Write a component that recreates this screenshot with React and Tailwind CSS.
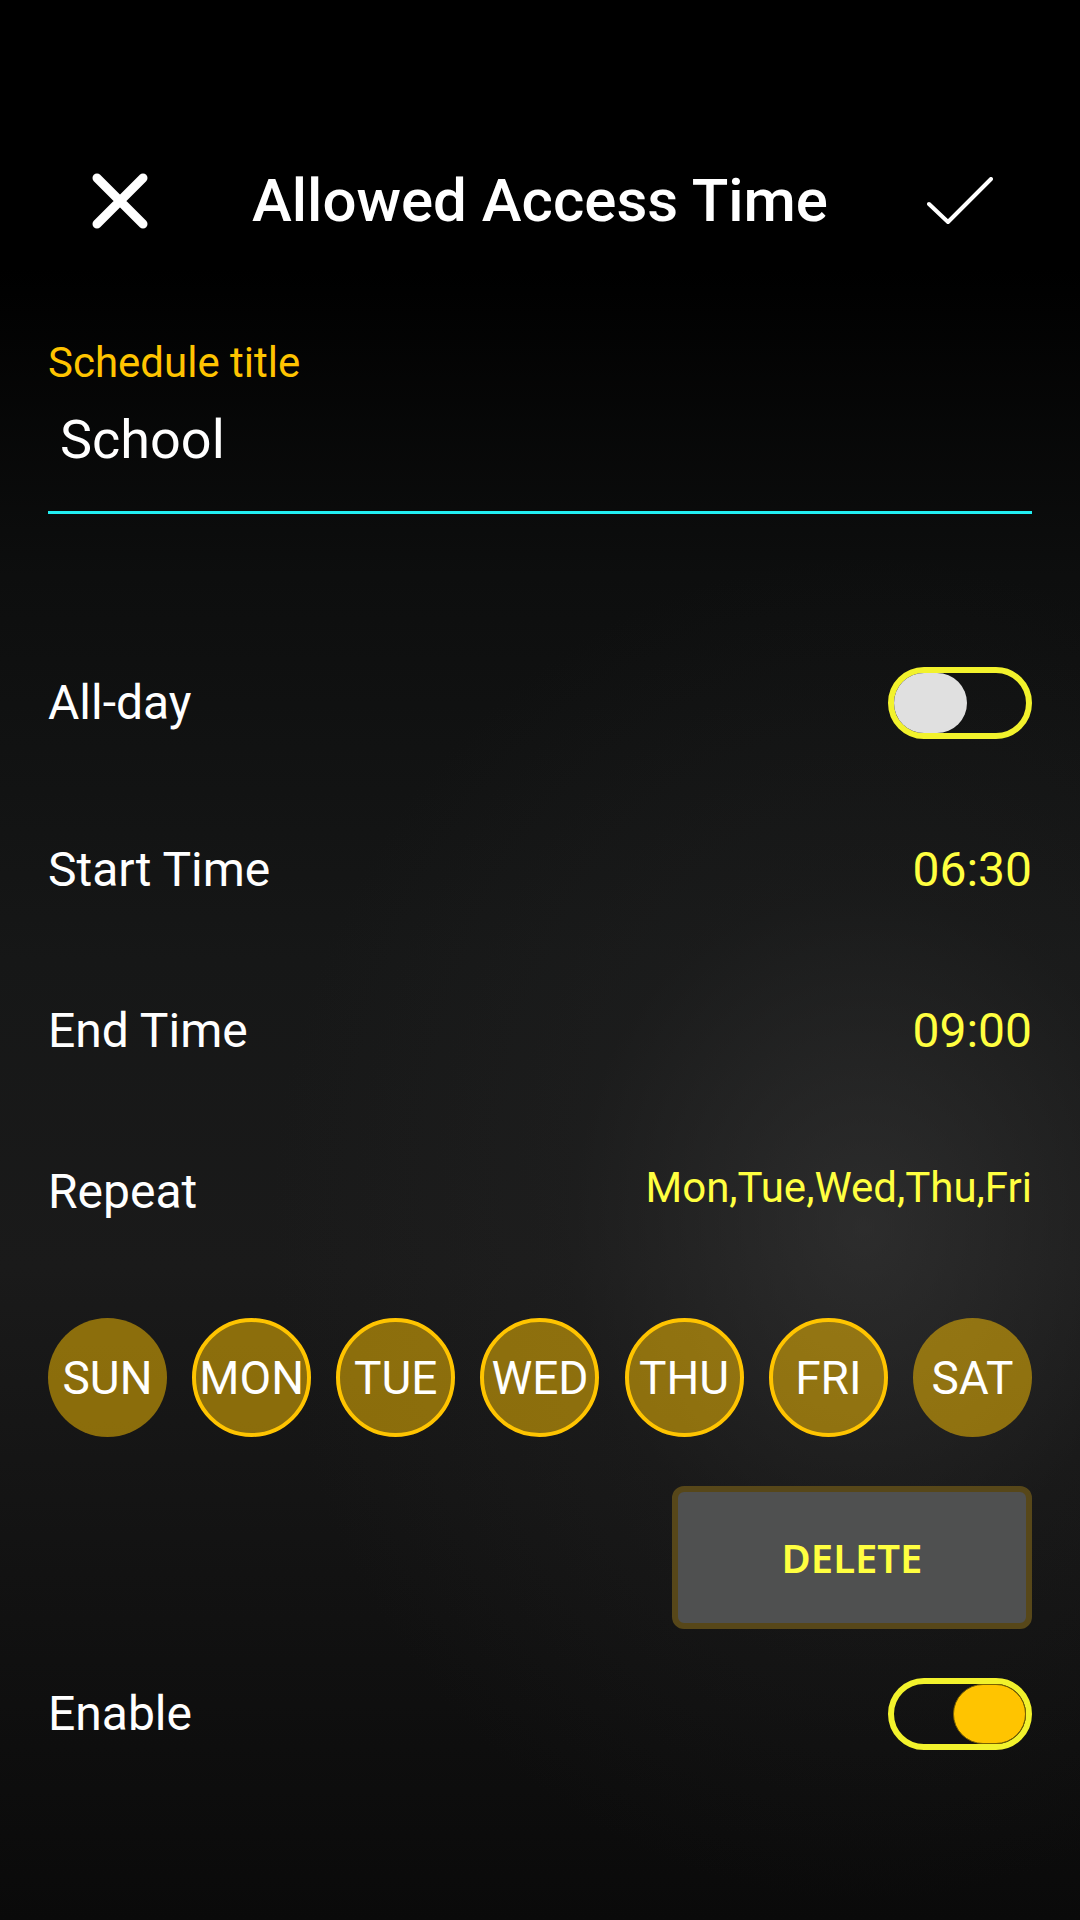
import React from 'react';

const days = [
  { label: 'SUN', on: false },
  { label: 'MON', on: true },
  { label: 'TUE', on: true },
  { label: 'WED', on: true },
  { label: 'THU', on: true },
  { label: 'FRI', on: true },
  { label: 'SAT', on: false },
];

const Toggle = ({ checked }) => (
  <div className="relative w-[144px] h-[72px] rounded-full border-[6px] border-[#f2f22c]">
    {checked ? (
      <div className="absolute right-0 top-0 w-[73px] h-[60px] rounded-full bg-[#ffc400] border border-[#7a6200]" />
    ) : (
      <div className="absolute left-0 top-0 w-[73px] h-[60px] rounded-full bg-[#e0e0e0]" />
    )}
  </div>
);

const Row = ({ label, height, children }) => (
  <div className={`flex items-center justify-between ${height}`}>
    <span className="text-[48px] leading-none text-white">{label}</span>
    {children}
  </div>
);

const App = () => {
  return (
    <div className="w-[1080px] h-[1920px] overflow-hidden bg-black bg-[radial-gradient(ellipse_55%_35%_at_80%_64%,rgba(60,60,60,0.55)_0%,rgba(40,40,40,0.25)_50%,transparent_100%),linear-gradient(to_bottom,#000_0%,#000_14%,#0d0e0e_30%,#161717_50%,#1a1a1a_66%,#121212_82%,#0a0a0a_100%)] font-['Roboto',sans-serif]">
      {/* header */}
      <div className="mt-[143px] h-[116px] flex items-center">
        <div className="w-[160px] pl-[92px]">
          <svg width="56" height="56" viewBox="0 0 56 56" fill="none" stroke="white" strokeWidth="9" strokeLinecap="round">
            <path d="M5 5 L51 51 M51 5 L5 51" />
          </svg>
        </div>
        <h1 className="flex-1 text-center text-[60px] leading-none font-medium text-white">Allowed Access Time</h1>
        <div className="w-[160px] pr-[87px] flex justify-end">
          <svg width="66" height="48" viewBox="0 0 66 48" fill="none" stroke="white" strokeWidth="4" strokeLinecap="round" strokeLinejoin="round">
            <path d="M2 27 L21 45 L64 2" />
          </svg>
        </div>
      </div>

      <div className="px-[48px]">
        {/* schedule title input */}
        <div className="mt-[83px]">
          <div className="text-[42px] leading-none text-[#ffc400]">Schedule title</div>
          <div className="mt-[29px] pl-[12px] text-[54px] leading-none text-white">School</div>
          <div className="mt-[44px] h-[3px] bg-[#22eef2]" />
        </div>

        {/* settings rows */}
        <div className="mt-[102px]">
          <Row label="All-day" height="h-[173px]">
            <Toggle checked={false} />
          </Row>
          <Row label="Start Time" height="h-[161px]">
            <span className="text-[48px] leading-none text-[#ffff40]">06:30</span>
          </Row>
          <Row label="End Time" height="h-[161px]">
            <span className="text-[48px] leading-none text-[#ffff40]">09:00</span>
          </Row>
          <Row label="Repeat" height="h-[161px]">
            <span className="mb-[8px] text-[42px] leading-none text-[#ffff40]">
              Mon,Tue,Wed,Thu,Fri
            </span>
          </Row>
        </div>

        {/* day picker */}
        <div className="mt-[46px] flex justify-between">
          {days.map((d) => (
            <div
              key={d.label}
              className={`w-[119px] h-[119px] rounded-full flex items-center justify-center bg-[#ffc400]/50 text-[46px] leading-none text-white ${
                d.on ? 'border-4 border-[#ffc400]' : ''
              }`}
            >
              {d.label}
            </div>
          ))}
        </div>

        {/* delete */}
        <div className="mt-[49px] flex justify-end">
          <button className="w-[360px] h-[143px] rounded-[12px] border-[6px] border-[#574719] bg-[#4f5050] text-[40px] font-semibold text-[#ffff40] font-['Noto_Sans',sans-serif]">
            DELETE
          </button>
        </div>

        {/* enable */}
        <div className="mt-[35px]">
          <Row label="Enable" height="h-[100px]">
            <Toggle checked={true} />
          </Row>
        </div>
      </div>
    </div>
  );
};

export default App;
